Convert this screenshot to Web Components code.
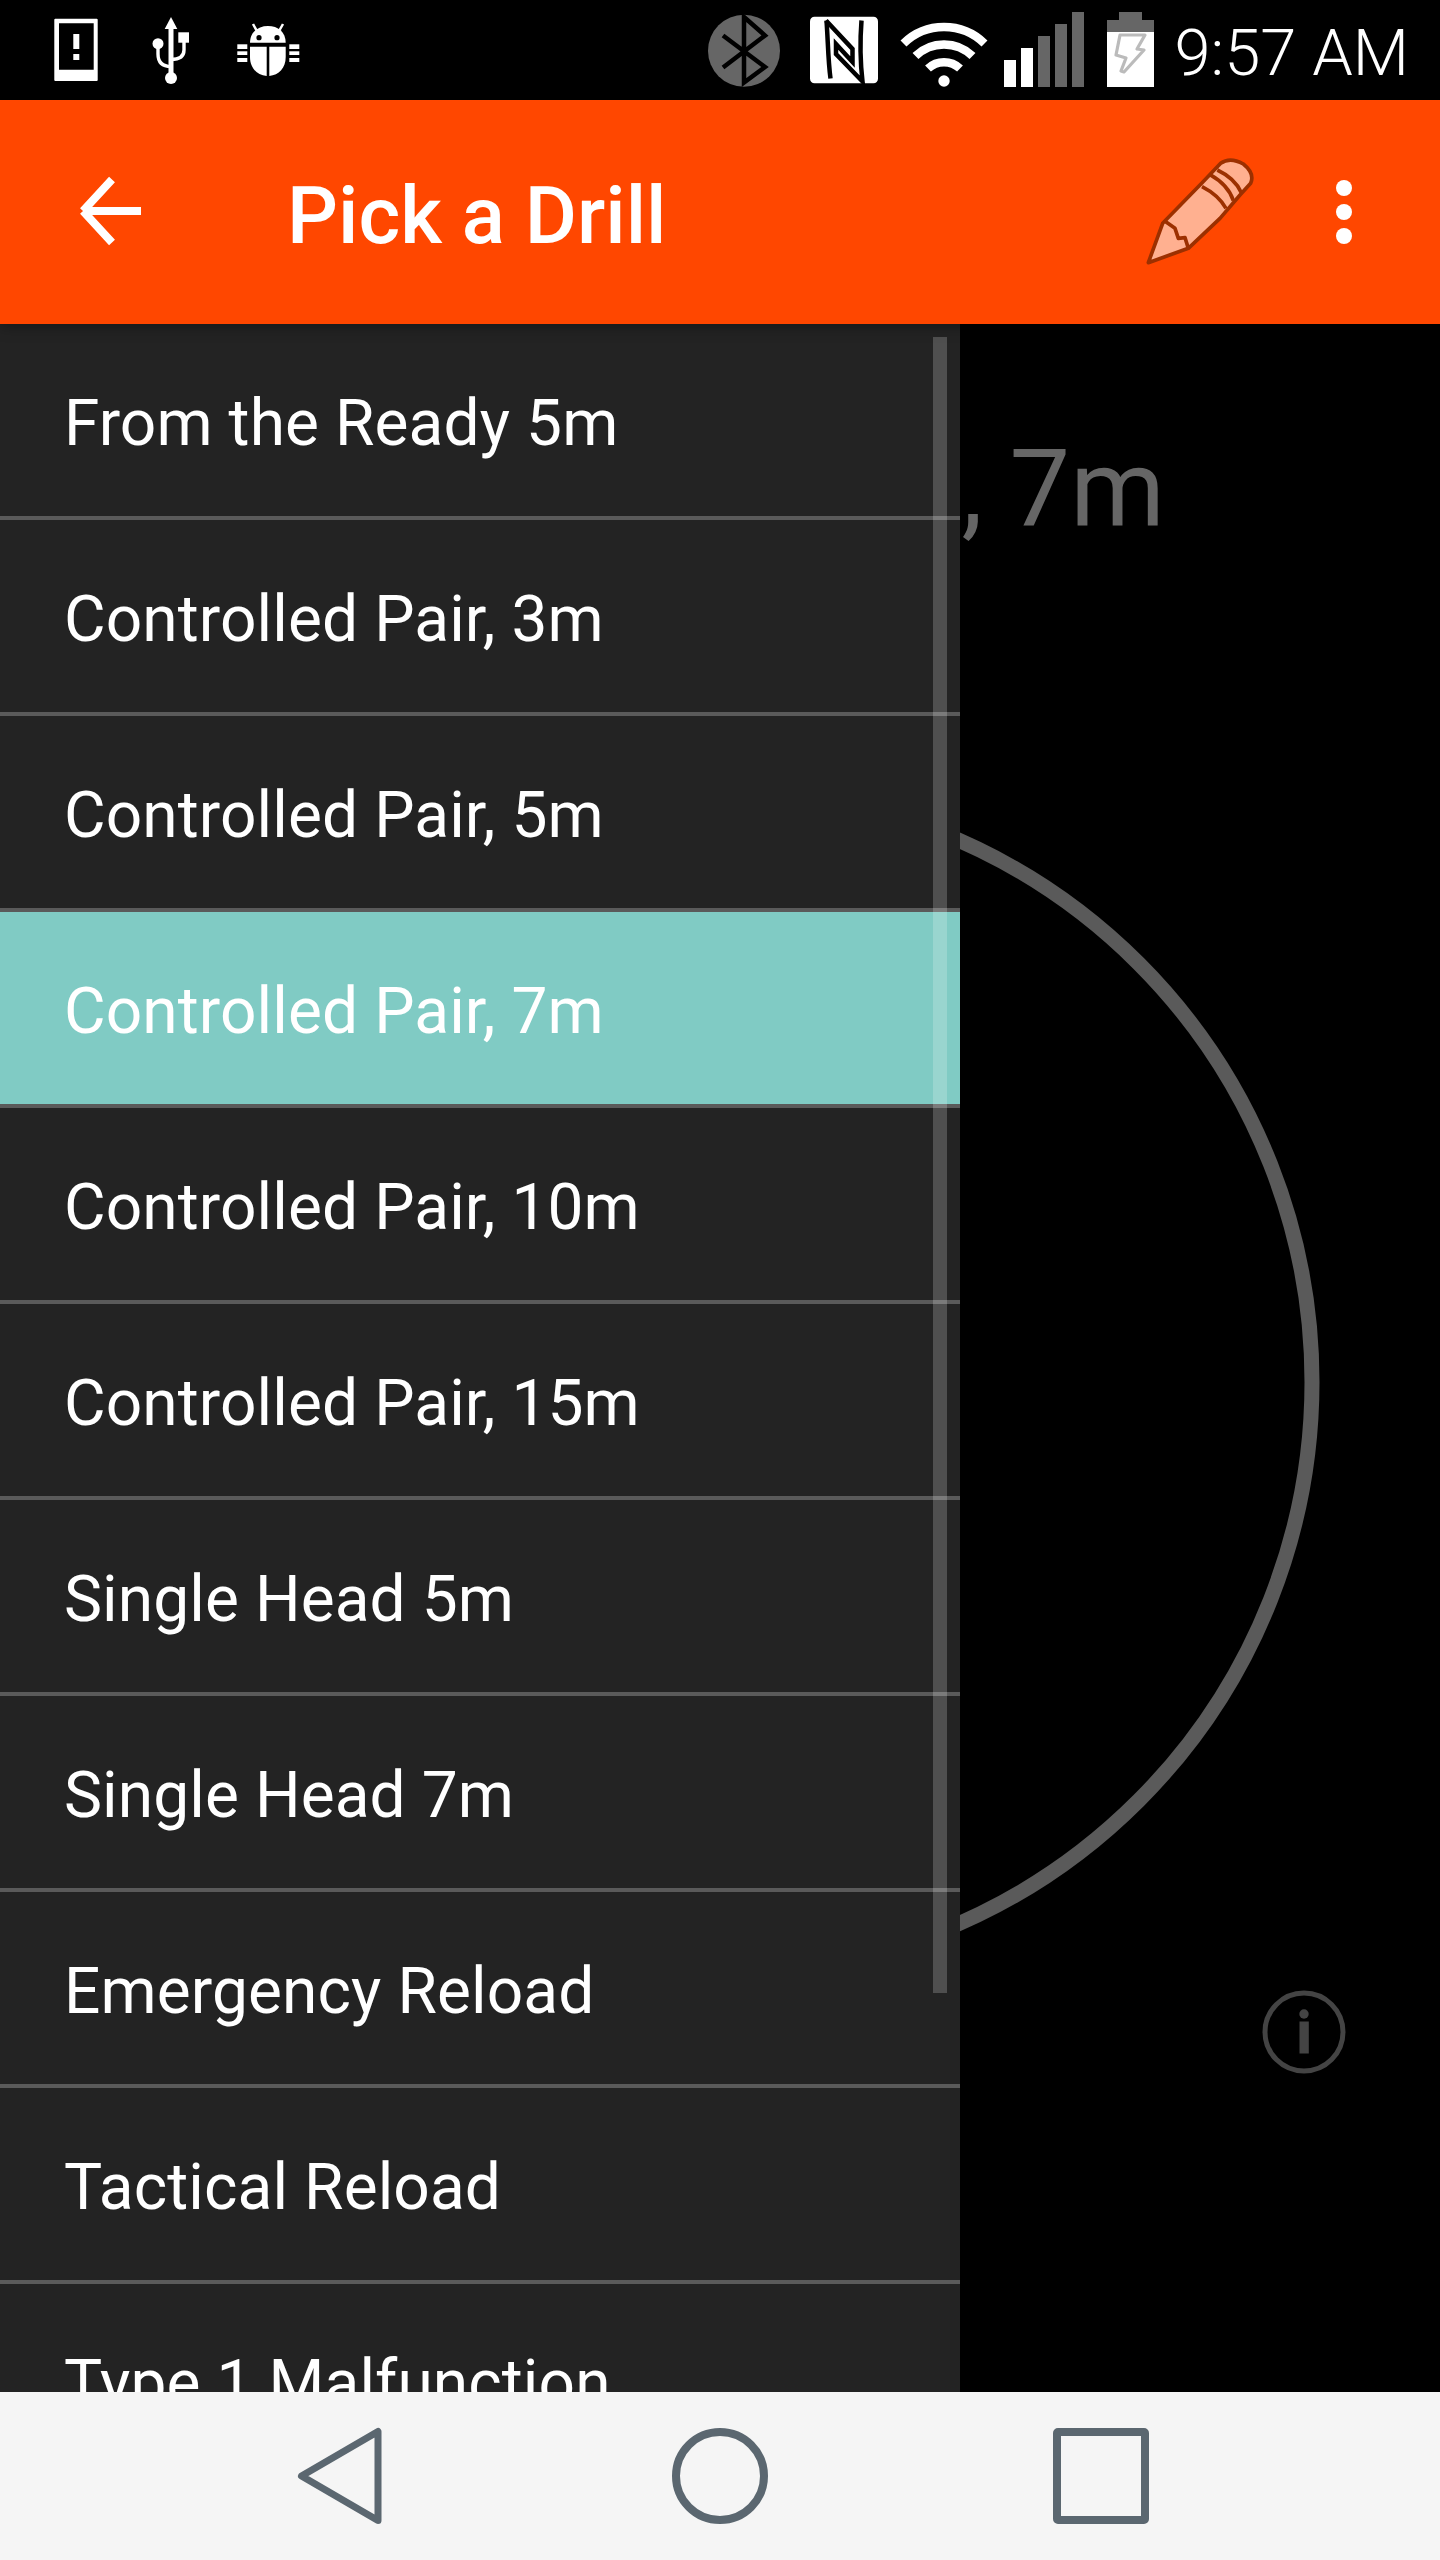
<!DOCTYPE html>
<html><head><meta charset="utf-8"><style>
html,body{margin:0;padding:0;background:#000;font-family:Roboto,"Liberation Sans",sans-serif}
phone-screen{width:1440px;height:2560px}
</style></head><body>
<phone-screen>
  <status-bar slot="status" time="9:57 AM"></status-bar>
  <app-bar slot="bar" title="Pick a Drill"></app-bar>
  <drill-view slot="view" title=", 7m"></drill-view>
  <drill-list slot="drawer">
    <drill-item>From the Ready 5m</drill-item>
    <drill-item>Controlled Pair, 3m</drill-item>
    <drill-item>Controlled Pair, 5m</drill-item>
    <drill-item selected>Controlled Pair, 7m</drill-item>
    <drill-item>Controlled Pair, 10m</drill-item>
    <drill-item>Controlled Pair, 15m</drill-item>
    <drill-item>Single Head 5m</drill-item>
    <drill-item>Single Head 7m</drill-item>
    <drill-item>Emergency Reload</drill-item>
    <drill-item>Tactical Reload</drill-item>
    <drill-item>Type 1 Malfunction</drill-item>
  </drill-list>
  <nav-bar slot="nav"></nav-bar>
</phone-screen>
<script>
function def(name, css, html, init){
  customElements.define(name, class extends HTMLElement{
    constructor(){super();const r=this.attachShadow({mode:'open'});r.innerHTML='<style>'+css+'</style>'+html;}
    connectedCallback(){ if(init) init(this, this.shadowRoot); }
  });
}
def('phone-screen',`
  :host{display:flex;flex-direction:column;overflow:hidden;background:#000}
  .main{flex:1;position:relative;overflow:hidden;min-height:0}
  .drawer{position:absolute;left:0;top:0;bottom:0;width:960px;z-index:2}
`,`<slot name="status"></slot><slot name="bar"></slot>
   <div class="main"><slot name="view"></slot><div class="drawer"><slot name="drawer"></slot></div></div>
   <slot name="nav"></slot>`);

def('status-bar',`
  :host{display:flex;align-items:center;height:100px;background:#000;color:#fff;flex:none}
  svg{display:block;flex:none;height:100px}
  .time{font:300 65px/100px Roboto,"Liberation Sans",sans-serif;margin-left:20px;white-space:nowrap;position:relative;top:3px}
  .sp{flex:1}
`,`
  <svg width="260" viewBox="50 0 260 100" style="margin-left:50px">
    <path fill="#fff" fill-rule="evenodd" d="M55.3 18.7H96.7a1 1 0 0 1 1 1V80a1 1 0 0 1-1 1H55.3a1 1 0 0 1-1-1V19.7a1 1 0 0 1 1-1ZM59 23.3V69.7H93.7V23.3Z"/>
    <rect x="73.3" y="34" width="6" height="15" fill="#fff"/><rect x="73.3" y="54" width="6" height="6" fill="#fff"/>
    <path fill="#fff" d="M171 17l6.3 12h-12.6z"/>
    <path fill="none" stroke="#fff" stroke-width="5" d="M171 28V74"/>
    <circle cx="171" cy="78" r="6" fill="#fff"/>
    <circle cx="158" cy="43.7" r="5.5" fill="#fff"/>
    <rect x="178.3" y="32.3" width="10.7" height="10.4" fill="#fff"/>
    <path fill="none" stroke="#fff" stroke-width="3.4" d="M158 46V54Q158 66.500 171 66.500M184 41V50Q184 59.500 171 59.500"/>
    <g fill="#fff">
      <path d="M250 42.700C250 32 258 26 268 26S285.700 32 285.700 42.700Z"/>
      <path d="M250 46.700H266.700V76C257 75 250 68 250 57ZM269.300 46.700H285.700V57C285.700 68 279 75 269.300 76Z"/>
      <rect x="237.300" y="44.300" width="10" height="4.700"/><rect x="237.300" y="51.300" width="10" height="3.700"/><rect x="237.300" y="58" width="10" height="4"/>
      <rect x="289.300" y="44.300" width="10" height="4.700"/><rect x="289.300" y="51.300" width="10" height="3.700"/><rect x="289.300" y="58" width="10" height="4"/>
    </g>
    <path stroke="#fff" stroke-width="2.500" d="M253 24L257.500 32M283 24L278.500 32"/>
    <circle cx="259" cy="37.700" r="2.600" fill="#000"/><circle cx="277" cy="37.700" r="2.600" fill="#000"/>
  </svg>
  <div class="sp"></div>
  <svg width="72" viewBox="708 0 72 100"><ellipse cx="744" cy="50.700" rx="36" ry="36" fill="#666"/>
    <path fill="none" stroke="#000" stroke-width="4.500" d="M723 35.500L765 67L744 82.500V17L765 35.500L723 67.500"/></svg>
  <svg width="68" viewBox="810 0 68 100" style="margin-left:30px"><rect x="810" y="16.700" width="68" height="66.600" rx="4.500" fill="#fff"/>
    <path fill="none" stroke="#000" stroke-width="4.500" d="M826.500 20.500C828 40 828 60 830.500 78.500"/>
    <path fill="none" stroke="#000" stroke-width="4.500" d="M826 20.500L852.500 49V62L836 44V54L862.500 81.500C860 60 860 40 861.500 20.500"/></svg>
  <svg width="88" viewBox="900 0 88 100" style="margin-left:22px">
    <g fill="none" stroke="#fff" stroke-width="8.500"><path d="M903.500 43.500A58 58 0 0 1 984.500 43.500"/><path d="M915.500 56A41 41 0 0 1 972.500 56"/><path d="M928 68.500A23.500 23.500 0 0 1 960 68.500"/></g>
    <circle cx="944" cy="81" r="5.700" fill="#fff"/></svg>
  <svg width="80" viewBox="1004 0 80 100" style="margin-left:16px">
    <rect x="1004" y="60" width="12" height="27" fill="#fff"/><rect x="1021" y="48" width="12" height="39" fill="#fff"/>
    <rect x="1038" y="36" width="12" height="51" fill="#666"/><rect x="1055" y="24" width="12" height="63" fill="#666"/><rect x="1072" y="12" width="12" height="75" fill="#666"/></svg>
  <svg width="47" viewBox="1107 0 47 100" style="margin-left:23px">
    <path fill="#666" d="M1119 12H1142V20H1154V32H1107V20H1119Z"/><rect x="1107" y="32" width="47" height="55" fill="#fff"/>
    <path fill="none" stroke="#bbb" stroke-width="3.200" stroke-linejoin="round" d="M1120 35H1145L1137 49L1144 50L1124 72L1121 71L1126 58L1116 55Z"/></svg>
  <div class="time" id="t"></div>
  <div style="width:31px;flex:none"></div>
`,(h,r)=>{r.getElementById('t').textContent=h.getAttribute('time')});

def('app-bar',`
  :host{display:flex;align-items:center;height:224px;background:#ff4700;color:#fff;flex:none;position:relative;z-index:3;box-shadow:0 2px 14px rgba(0,0,0,.35)}
  svg{display:block;flex:none}
  .t{font:500 80px/1 Roboto,"Liberation Sans",sans-serif;white-space:nowrap;margin-left:142px;flex:1;position:relative;top:4px}
`,`
  <svg width="70" height="70" viewBox="0 0 70 70" style="margin-left:75px;margin-top:-2px"><path fill="none" stroke="#fff" stroke-width="8" d="M66 35H8M37 3.500L8 35M37 66.500L8 35" stroke-linejoin="miter"/></svg>
  <div class="t" id="t"></div>
  <svg width="140" height="140" viewBox="0 0 420 420" style="margin-top:-4px">
    <path fill="#ffb090" stroke="#9c3000" stroke-width="11" stroke-linejoin="round" d="M55 368L98 250L215 130L272 70Q300 50 340 72Q375 100 362 130L330 165L270 235L175 325Z"/>
    <path fill="none" stroke="#9c3000" stroke-width="11" stroke-linejoin="round" d="M104 243L135 265L145 295L165 293L175 325M216 140Q265 165 288 205M240 104Q295 135 310 182M262 90Q315 115 334 158"/>
  </svg>
  <svg width="16" height="64" viewBox="0 0 16 64" style="margin-left:66px;margin-right:88px"><ellipse cx="8" cy="8" rx="8" ry="8" fill="#fff"/><ellipse cx="8" cy="32" rx="8" ry="8" fill="#fff"/><ellipse cx="8" cy="56" rx="8" ry="8" fill="#fff"/></svg>
`,(h,r)=>{r.getElementById('t').textContent=h.getAttribute('title')});

def('drill-view',`
  :host{display:block;position:absolute;inset:0;background:#000}
  .title{font:400 108px/1 Roboto,"Liberation Sans",sans-serif;color:#666;white-space:nowrap;text-align:right;padding:111px 275px 0 0}
  svg{position:absolute;left:0;top:0}
`,`
  <svg width="1440" height="2068" viewBox="0 0 1440 2068">
    <circle cx="720" cy="1058" r="592" fill="none" stroke="#5a5a5a" stroke-width="15"/>
    <circle cx="1304" cy="1708" r="39" fill="none" stroke="#444" stroke-width="5"/>
    <circle cx="1304" cy="1690" r="4.700" fill="#444"/><rect x="1299.500" y="1697.500" width="9.300" height="32" fill="#444"/>
  </svg>
  <div class="title" id="t"></div>
`,(h,r)=>{r.getElementById('t').textContent=h.getAttribute('title')});

def('drill-list',`
  :host{display:block;position:relative;height:100%;background:#232323;overflow:hidden}
  .list{display:flex;flex-direction:column}
  .thumb{position:absolute;left:933px;top:13px;width:14px;height:1656px;background:rgba(255,255,255,.2)}
`,`<div class="list"><slot></slot></div><div class="thumb"></div>`);

def('drill-item',`
  :host{display:flex;align-items:center;flex:none;box-sizing:border-box;height:196px;border-bottom:4px solid #5a5a5a;padding:8px 0 0 64px;
    font:400 64px/1 Roboto,"Liberation Sans",sans-serif;letter-spacing:.1px;color:#fff;white-space:nowrap;background:#232323}
  :host([selected]){background:#80cbc4}
`,`<slot></slot>`);

def('nav-bar',`
  :host{display:flex;height:168px;background:#f5f5f5;flex:none;position:relative;z-index:3;align-items:center}
  svg{display:block;flex:none}
`,`
  <svg width="90" height="100" viewBox="0 0 90 100" style="margin-left:295px"><path fill="none" stroke="#5b6770" stroke-width="7" stroke-linejoin="round" d="M6.500 50L83 5.500V94.500Z"/></svg>
  <svg width="96" height="96" viewBox="0 0 96 96" style="margin-left:287px"><circle cx="48" cy="48" r="44" fill="none" stroke="#5b6770" stroke-width="8"/></svg>
  <svg width="96" height="96" viewBox="0 0 96 96" style="margin-left:285px"><rect x="4" y="4" width="88" height="88" rx="1" fill="none" stroke="#5b6770" stroke-width="8"/></svg>
`);
</script>
</body></html>
